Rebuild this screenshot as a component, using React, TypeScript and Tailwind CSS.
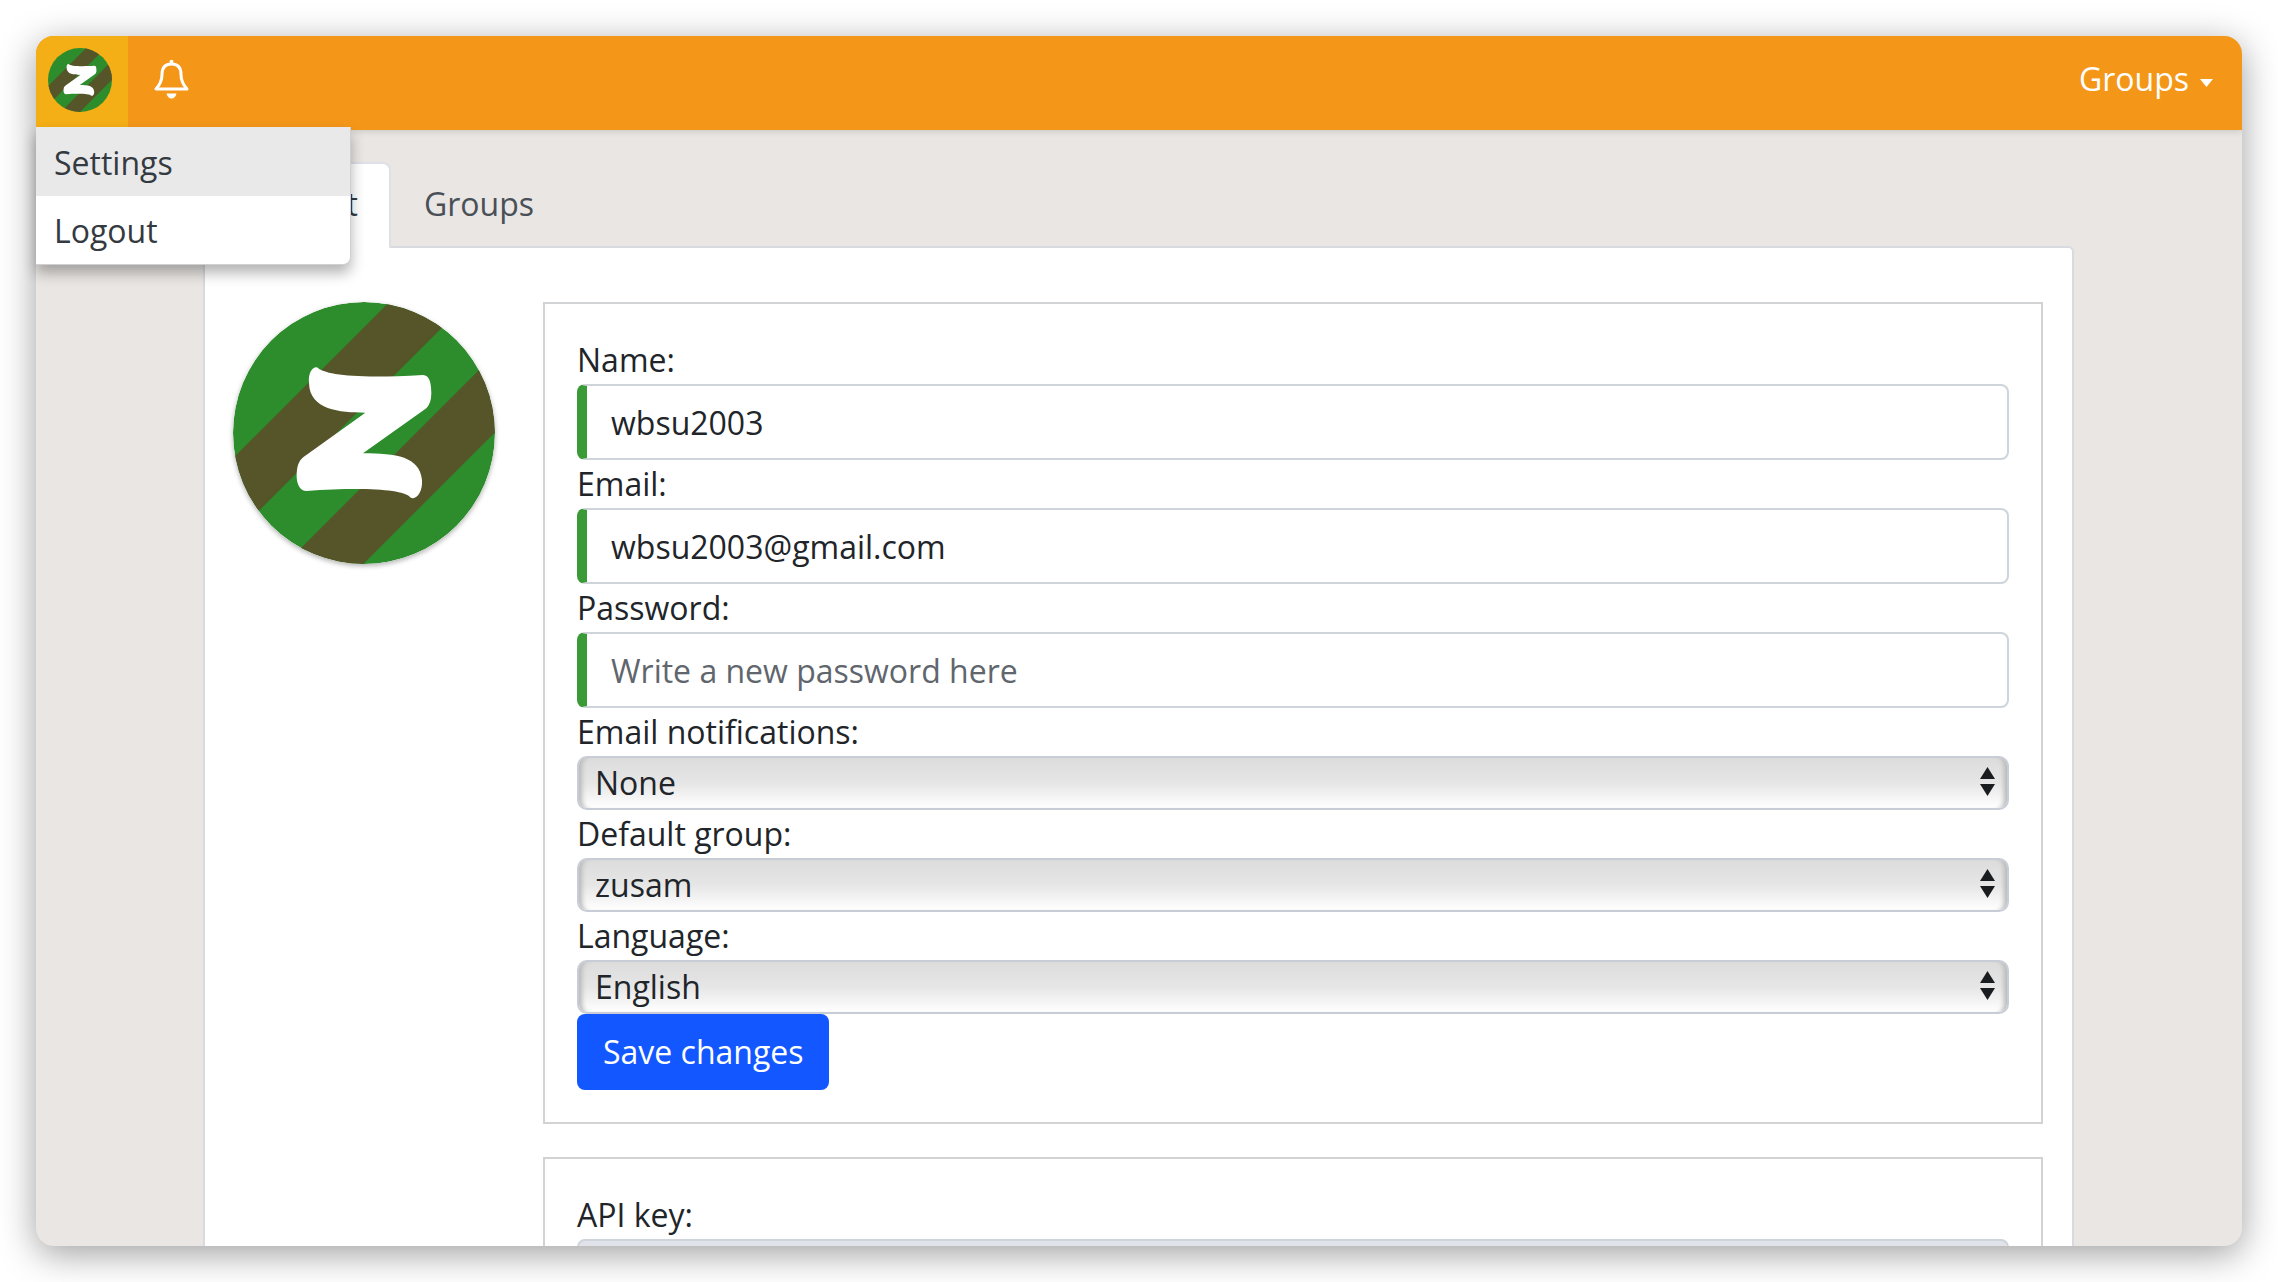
function ZusamLogo({ className }: { className: string }) {
  return (
    <svg viewBox="100 66 786 786" className={className}>
      <defs>
        <clipPath id="logo-circle">
          <circle cx="493" cy="459" r="393" />
        </clipPath>
      </defs>
      <g clipPath="url(#logo-circle)">
        <rect x="100" y="66" width="786" height="786" fill="#2d8c2b" />
        <polygon points="635,0 870,0 0,870 0,635" fill="#56552a" />
        <polygon points="1108,0 1343,0 400,943 165,943" fill="#56552a" />
      </g>
      <path
        d="M352 262 C375 285 470 297 670 285 C690 285 695 310 695 340 C695 360 690 375 680 385 L490 520 C590 520 660 530 667 600 C670 640 645 665 630 650 C610 630 500 620 320 633 C295 632 288 600 292 570 C295 545 305 535 320 525 L497 398 C420 398 330 390 328 310 C325 275 340 260 352 262 Z"
        fill="#ffffff"
      />
    </svg>
  );
}

function BellIcon() {
  return (
    <svg viewBox="0 0 35 40" className="w-[35px] h-10" fill="none" stroke="#ffffff" strokeWidth="3" strokeLinejoin="round">
      <path d="M17.5 5 C10 5 8 10.5 8 15.5 C8 21.5 6.5 25 2 30 L33 30 C28.5 25 27 21.5 27 15.5 C27 10.5 25 5 17.5 5 Z" />
      <circle cx="17.5" cy="2.8" r="2" fill="#ffffff" stroke="none" />
      <path d="M12.5 34.5 L22.5 34.5 C22 37.5 19.5 39.5 17.5 39.5 C15.5 39.5 13 37.5 12.5 34.5 Z" fill="#ffffff" stroke="none" />
    </svg>
  );
}

function TextField({ label, value, placeholder }: { label: string; value?: string; placeholder?: string }) {
  return (
    <div>
      <label className="block h-12 leading-[48px]">{label}</label>
      <input
        readOnly
        defaultValue={value}
        placeholder={placeholder}
        className="block w-full h-[76px] pl-6 pr-6 bg-white text-[#212529] placeholder:text-[#5f666d] border-2 border-l-[10px] border-[#ced4da] border-l-[#3a9a36] rounded-[8px] outline-none"
      />
    </div>
  );
}

function SelectField({ label, value }: { label: string; value: string }) {
  return (
    <div>
      <label className="block h-12 leading-[48px]">{label}</label>
      <div className="relative">
        <select
          defaultValue={value}
          className="block w-full h-[54px] pl-4 pr-12 appearance-none border-2 border-[#c8ccd6] rounded-[10px] text-[#212529] outline-none bg-[linear-gradient(#dcdcdc,#e6e6e6_50%,#ffffff)] shadow-[inset_7px_0_5px_-4px_#b8b8b8,inset_-7px_0_5px_-4px_#b8b8b8]"
        >
          <option>{value}</option>
        </select>
        <svg viewBox="0 0 15 29" className="absolute right-[14px] top-[11px] w-[15px] h-[29px]" fill="#1a1d20">
          <polygon points="7.5,0 15,12 0,12" />
          <polygon points="0,17 15,17 7.5,29" />
        </svg>
      </div>
    </div>
  );
}

export default function App() {
  return (
    <div className="h-screen overflow-hidden bg-white pl-9 pt-9 pr-9 font-['Open_Sans',sans-serif] text-[32px] text-[#212529]">
      <div className="relative h-[1210px] w-[2206px] rounded-[18px] bg-[#e9e6e3] shadow-[0_8px_36px_rgba(0,0,0,0.38)]">
        <div className="h-full overflow-hidden rounded-[18px]">
          {/* Navbar */}
          <nav className="flex h-[94px] items-stretch bg-[#f49719] shadow-[0_2px_6px_rgba(0,0,0,0.12)] relative">
            <div className="flex w-[92px] items-center pl-3 pb-[6px] bg-[#f4ae16]">
              <ZusamLogo className="w-16 h-16" />
            </div>
            <div className="ml-[26px] flex items-center pb-[8px]">
              <BellIcon />
            </div>
            <div className="ml-auto flex items-center gap-[11px] pr-[29px] pb-[8px] text-white">
              <span>Groups</span>
              <svg viewBox="0 0 13 8" className="w-[13px] h-2 mt-2" fill="#ffffff">
                <polygon points="0,0 13,0 6.5,8" />
              </svg>
            </div>
          </nav>

          {/* Tabs */}
          <div className="ml-[167px] mr-[168px] pt-[32px]">
            <div className="flex h-[86px] text-[#495057]">
              <div className="w-[188px] h-[86px] pt-[16px] pl-[32px] bg-white border-2 border-b-0 border-[#dde1e7] rounded-t-[8px] text-[#343a40]">
                Account
              </div>
              <div className="pl-[33px] pt-[18px]">Groups</div>
            </div>

            {/* Settings card */}
            <div className="-mt-[2px] flex items-start bg-white border-2 border-[#d8dadf] rounded-[6px] pl-[28px] pr-[29px] pt-[54px] min-h-[1000px]">
              <ZusamLogo className="w-[262px] h-[262px] shrink-0 rounded-full shadow-[0_2px_5px_rgba(0,0,0,0.3)]" />
              <div className="ml-[48px] flex-1 flex flex-col gap-[33px]">
                <div className="border-2 border-[#d2d3d5] p-8">
                  <TextField label="Name:" value="wbsu2003" />
                  <TextField label="Email:" value="wbsu2003@gmail.com" />
                  <TextField label="Password:" placeholder="Write a new password here" />
                  <SelectField label="Email notifications:" value="None" />
                  <SelectField label="Default group:" value="zusam" />
                  <SelectField label="Language:" value="English" />
                  <button className="block h-[76px] pl-[26px] pr-[25px] bg-[#1257ff] text-white rounded-[8px]">Save changes</button>
                </div>
                <div className="border-2 border-[#d2d3d5] p-8">
                  <label className="block h-12 leading-[48px]">API key:</label>
                  <div className="h-[76px] bg-[#e0e4ea] border-2 border-[#ced4da] rounded-[8px]" />
                </div>
              </div>
            </div>
          </div>
        </div>

        {/* User menu */}
        <div className="absolute left-0 top-[91px] w-[315px] bg-white rounded-br-[8px] border-r border-b border-[#d0d0d0] shadow-[0_8px_14px_rgba(0,0,0,0.3)] text-[#343a40]">
          <div className="h-[69px] pl-[18px] leading-[71px] bg-[#e9e9ea]">Settings</div>
          <div className="h-[68px] pl-[18px] leading-[69px]">Logout</div>
        </div>
      </div>
    </div>
  );
}
